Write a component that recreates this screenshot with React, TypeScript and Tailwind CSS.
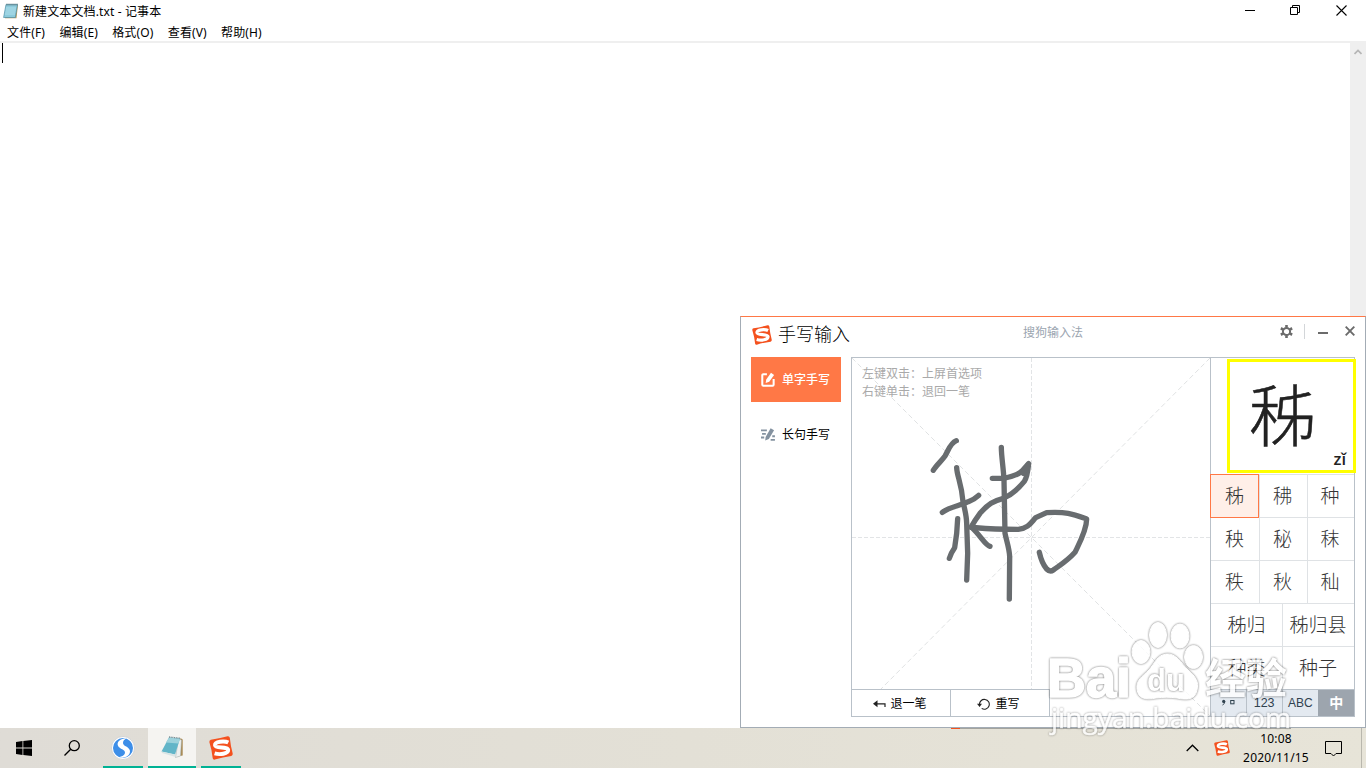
import type { JSX, ReactNode } from 'react'

const menuItems = ['文件(F)', '编辑(E)', '格式(O)', '查看(V)', '帮助(H)']
const singles = ['秭', '䄶', '种', '秧', '秘', '秣', '秩', '秋', '秈']
const phrases = ['秭归', '秭归县', '种类', '种子']

const SogouLogo = ({ className }: { className: string }): JSX.Element => (
  <svg viewBox="0 0 24 24" className={className}>
    <path
      d="M.4 6.2Q0 4.4 1.8 3.8Q10 2.6 18.6 .3Q20.4 0 20.8 1.8Q21.6 10 23.7 17.6Q24 19.4 22.3 20Q14 21 5.8 23.6Q4.1 24 3.7 22.2Q2.8 13.5 .4 6.2Z"
      fill="#f4511e"
    />
    <path
      d="M19.3 6.6C15.5 4.6 5.7 5.4 6 9.2C6.4 12.7 19 10.2 19.2 14C19.3 17.9 10.7 18.9 5.6 17.4"
      fill="none"
      stroke="#fff"
      strokeWidth="3.9"
    />
  </svg>
)

const NotepadIcon = ({ className }: { className: string }): JSX.Element => (
  <svg viewBox="0 0 16 16" className={className}>
    <path d="M3.5 1.5H15L13.5 15.2H2Z" fill="#b9975d" />
    <path d="M3 1.5H14.5L12.3 14.5H.6Z" fill="#8ccbdc" stroke="#4f8fa6" strokeWidth=".7" />
    <path d="M3 5H13M2.7 7H12.7M2.4 9H12.4M2 11H12" stroke="#c9ecf5" strokeWidth=".6" />
    <path d="M4 .5V2.7M6 .5V2.7M8 .5V2.7M10 .5V2.7M12 .5V2.7M14 .5V2.7" stroke="#617b86" strokeWidth=".8" />
  </svg>
)

const TitleBar = (): JSX.Element => (
  <div className="flex h-[22px] items-center justify-between pr-[19px] pl-[3px]">
    <div className="flex items-center gap-1">
      <NotepadIcon className="h-4 w-4" />
      <span className="mt-px tracking-[.12px]">新建文本文档.txt - 记事本</span>
    </div>
    <div className="mb-[2px] flex items-center gap-[35px]">
      <svg className="h-[11px] w-[11px]" viewBox="0 0 11 11">
        <path d="M1 5.5H11" stroke="#000" />
      </svg>
      <svg className="h-[11px] w-[11px]" viewBox="0 0 11 11" fill="none" stroke="#000">
        <path d="M.5 2.5H7.5V9.5H.5ZM2.5 2.5V.5H9.5V7.5H7.5" />
      </svg>
      <svg className="h-[11px] w-[11px]" viewBox="0 0 11 11" stroke="#000" strokeWidth="1.1">
        <path d="M.5 .5L10.5 10.5M10.5 .5L.5 10.5" />
      </svg>
    </div>
  </div>
)

const ModeButton = ({
  active,
  icon,
  label,
}: {
  active?: boolean
  icon: ReactNode
  label: string
}): JSX.Element => (
  <div
    className={
      active
        ? 'flex h-[45px] items-center gap-[6px] bg-[#ff7846] pl-[10px] font-medium text-white'
        : 'flex h-[45px] items-center gap-[6px] pl-[10px] text-black'
    }
  >
    {icon}
    <span>{label}</span>
  </div>
)

const Sidebar = (): JSX.Element => (
  <div className="flex w-[90px] flex-col gap-[10px]">
    <ModeButton
      active
      label="单字手写"
      icon={
        <svg className="h-[15px] w-[15px]" viewBox="0 0 14 14" fill="none">
          <path
            d="M5.5 2H2.2Q1.2 2 1.2 3V11.8Q1.2 12.8 2.2 12.8H10.8Q11.8 12.8 11.8 11.8V6.5"
            stroke="#fff"
            strokeWidth="1.9"
          />
          <path d="M4.4 10.2L4.8 7.2L9.3 .8L12.2 2.8L7.7 9Z" fill="#fff" />
        </svg>
      }
    />
    <ModeButton
      label="长句手写"
      icon={
        <svg className="h-[15px] w-[15px]" viewBox="0 0 14 14">
          <path d="M0 3.2H5.5M1 6.4H4.5M0 9.8H3M10.5 8.6H13M9 12H13" stroke="#8492a0" strokeWidth="1.7" />
          <path d="M3.9 12.7L4.3 9.3L9 1.2L12.2 3L7.3 11.2Z" fill="#8492a0" />
        </svg>
      }
    />
  </div>
)

const WritingPad = (): JSX.Element => (
  <div className="relative flex h-[360px] w-[360px] flex-col border border-[#b9c1c9]">
    <svg className="absolute top-0 left-0 h-[358px] w-[358px]" viewBox="0 0 358 358" fill="none">
      <path d="M179.5 0V331M0 179.5H358" stroke="#e2e4e6" strokeDasharray="4 2" />
      <path d="M0 0L358 358M358 0L29 331" stroke="#e0e2e3" strokeDasharray="5 3" />
      <g
        transform="translate(48 62) scale(.33333)"
        stroke="#686c6f"
        strokeWidth="16"
        strokeLinecap="round"
        strokeLinejoin="round"
      >
        <path d="M169 62C150 70 145 92 135 108C124 124 108 136 100 151" />
        <path d="M127 277C150 260 178 258 205 245Q225 237 236 226" />
        <path d="M170 143C171 170 185 190 189 245C196 275 200 290 200 310L203 400L200 480" />
        <path d="M173 296L170 340L164 383Q152 400 148 415" />
        <path d="M270 379C255 375 243 348 215 322" />
        <path d="M304 82C304 110 310 140 312 180L315 340C320 365 328 385 329 410L328 537" />
        <path d="M277 175H310Q350 168 366 153L386 131Q382 170 373 184C350 212 335 225 310 235C280 243 265 252 240 280Q225 300 213 322C250 325 270 328 355 328C385 325 393 308 407 293L440 278C500 275 515 281 560 297C560 330 538 370 525 397C500 425 480 435 460 450Q450 457 440 447C430 435 422 415 418 397" />
        <path d="M384 134L370 160" />
      </g>
    </svg>
    <div className="flex-1 pt-[7px] pl-[10px] leading-[18px] text-[#a9a9a9]">
      <p>左键双击：上屏首选项</p>
      <p>右键单击：退回一笔</p>
    </div>
    <div className="relative flex h-[27px] w-[198px] border-t border-r border-[#b9c1c9] bg-white pt-px">
      <div className="-mt-px flex w-[99px] items-center justify-center gap-[4px] border-r border-[#b9c1c9] pt-[2px] pr-[2px]">
        <svg className="h-[9px] w-[13px]" viewBox="0 0 13 9">
          <path d="M0 3.8L4.5 .3V7.3Z" fill="#222" />
          <path d="M3 3.8H12V7" fill="none" stroke="#222" strokeWidth="1.2" />
        </svg>
        <span>退一笔</span>
      </div>
      <div className="flex flex-1 items-center justify-center gap-[5px] pt-px pr-[3px]">
        <svg className="h-[12px] w-[13px]" viewBox="0 0 13 12">
          <path d="M2.5 6.7A4.9 4.9 0 1 1 4.7 10.4" fill="none" stroke="#222" strokeWidth="1.1" />
          <path d="M0 5.8H5L2.6 9Z" fill="#222" />
        </svg>
        <span>重写</span>
      </div>
    </div>
  </div>
)

const Candidates = (): JSX.Element => (
  <div className="flex h-[360px] w-[144px] flex-col border-t border-r border-b border-[#b9c1c9]">
    <div className="relative h-[116px]">
      <div className="absolute top-px left-[16px] h-[114px] w-[129px] border-[3px] border-[#ffff00] bg-white text-[#222]">
        <span className="absolute top-[15px] left-[19px] text-[67px] leading-[76px] font-light [-webkit-text-stroke:.5px]">
          秭
        </span>
        <span className="absolute right-[7px] bottom-px font-['Open_Sans','Noto_Sans',sans-serif] text-[16.5px] leading-[20px] font-semibold">
          zǐ
        </span>
      </div>
    </div>
    <div className="grid grid-cols-[48px_48px_47px] text-[19px] leading-none font-light text-[#333]">
      {singles.map((char, index) => (
        <div
          key={char}
          className={
            index === 0
              ? 'relative z-10 -mb-px -ml-px flex h-[44px] items-center justify-center border border-[#ff7846] bg-[#ffefe8]'
              : index % 3 === 0
                ? 'flex h-[43px] items-center justify-center border-t border-[#dfe2e5] pr-px'
                : 'flex h-[43px] items-center justify-center border-t border-l border-[#dfe2e5] pr-[2px]'
          }
        >
          {char}
        </div>
      ))}
    </div>
    <div className="grid grid-cols-[71px_72px] text-[19px] leading-none font-light text-[#333]">
      {phrases.map((phrase, index) => (
        <div
          key={phrase}
          className={
            index % 2 === 0
              ? 'flex h-[43px] items-center justify-center border-t border-[#dfe2e5]'
              : 'flex h-[43px] items-center justify-center border-t border-l border-[#dfe2e5] pr-px'
          }
        >
          {phrase}
        </div>
      ))}
    </div>
    <div className="grid flex-1 grid-cols-4 border-t border-[#b9c1c9] bg-[#e3e9f0] font-['Liberation_Sans','Noto_Sans_CJK_SC',sans-serif] text-[12px] text-[#30424f]">
      <div className="flex items-center justify-center gap-[4px] border-r border-[#b9c1c9]">
        <svg className="h-[8px] w-[14px]" viewBox="0 0 14 8">
          <circle cx="2.7" cy="2.4" r="1.6" fill="#30424f" />
          <path d="M3.8 2.4Q4 4.8 1.5 6" fill="none" stroke="#30424f" />
          <rect x="9.7" y="1.5" width="3.3" height="3.3" fill="none" stroke="#30424f" />
        </svg>
      </div>
      <div className="flex items-center justify-center border-r border-[#b9c1c9] text-[12.5px]">123</div>
      <div className="flex items-center justify-center">ABC</div>
      <div className="flex items-center justify-center bg-[#9da5ae] text-[14px] font-bold text-white">
        中
      </div>
    </div>
  </div>
)

const HandwritingWindow = (): JSX.Element => (
  <div className="absolute top-[316px] left-[740px] h-[412px] w-[626px] border border-[#a3acb5] border-t-[#ff7846] bg-white">
    <div className="flex h-[40px] items-start pl-[11px]">
      <div className="flex w-[271px] items-center gap-[6px] pt-[4px]">
        <SogouLogo className="h-[20px] w-[20px]" />
        <span className="text-[18px] leading-[27px] font-light text-black">手写输入</span>
      </div>
      <span className="pt-[7px] text-[12px] leading-[18px] text-[#9ba5b0]">搜狗输入法</span>
      <div className="ml-auto flex w-[85px] items-center pt-[7px]">
        <svg className="h-[13px] w-[13px]" viewBox="0 0 12 12">
          <circle cx="6" cy="6" r="3.3" fill="none" stroke="#6b6b6b" strokeWidth="1.8" />
          <path
            d="M6 0V2.4M6 9.6V12M.8 3L2.9 4.2M9.1 7.8L11.2 9M.8 9L2.9 7.8M9.1 4.2L11.2 3"
            stroke="#6b6b6b"
            strokeWidth="2.4"
          />
        </svg>
        <span className="ml-[11px] h-[15px] w-px bg-[#d3d6d9]" />
        <span className="mt-[3px] ml-[13px] h-[2px] w-[10px] bg-[#6b6b6b]" />
        <svg className="-mt-px ml-[17px] h-[10px] w-[10px] shrink-0" viewBox="0 0 10 10">
          <path d="M.7 .7L9.3 9.3M9.3 .7L.7 9.3" stroke="#6b6b6b" strokeWidth="1.9" />
        </svg>
      </div>
    </div>
    <div className="flex pl-[10px]">
      <Sidebar />
      <div className="ml-[10px] flex">
        <WritingPad />
        <Candidates />
      </div>
    </div>
  </div>
)

const Watermark = (): JSX.Element => (
  <div className="pointer-events-none absolute top-[616px] left-[1044px] h-[124px] w-[255px] opacity-80">
    <svg viewBox="0 0 255 124" className="h-[124px] w-[255px]" fill="#fff" stroke="#fff">
      <g className="drop-shadow-[0_0_1px_rgba(0,0,0,0.7)]">
        <ellipse cx="97" cy="36" rx="9" ry="11.5" />
        <ellipse cx="114" cy="19" rx="8.5" ry="12.5" />
        <ellipse cx="136" cy="20" rx="9" ry="12" />
        <ellipse cx="149.5" cy="41" rx="9" ry="11.5" />
        <path d="M122.5 38C132 37 137 47 144 54C152 61 155 66 153 74C151 84 143 84 133 82C126 81 120 81 112 82C102 84 94 83 93 73C92 64 98 61 105 54C111 47 113 39 122.5 38Z" />
      </g>
      <g
        strokeWidth="1.5"
        strokeLinejoin="round"
        fontWeight="700"
        className="font-['Liberation_Sans','Noto_Sans_CJK_SC',sans-serif]"
      >
        <text
          x="3"
          y="81"
          fontSize="55"
          textLength="84"
          lengthAdjust="spacingAndGlyphs"
          className="drop-shadow-[0_0_1px_rgba(0,0,0,0.7)]"
        >
          Bai
        </text>
        <text
          x="103"
          y="75"
          fontSize="31"
          textLength="38"
          lengthAdjust="spacingAndGlyphs"
          strokeWidth="0"
          className="drop-shadow-[0_0_1px_rgba(0,0,0,0.7)]"
        >
          du
        </text>
        <text
          x="161"
          y="78"
          fontSize="42"
          textLength="82"
          lengthAdjust="spacingAndGlyphs"
          strokeWidth="0"
          className="drop-shadow-[0_0_1px_rgba(0,0,0,0.7)]"
        >
          经验
        </text>
      </g>
      <text
        x="7"
        y="112"
        fontSize="27"
        textLength="240"
        lengthAdjust="spacingAndGlyphs"
        strokeWidth=".5"
        className="font-['Open_Sans',sans-serif] drop-shadow-[0_0_1px_rgba(0,0,0,0.5)]"
      >
        jingyan.baidu.com
      </text>
    </svg>
  </div>
)

const Taskbar = (): JSX.Element => (
  <div className="flex h-[40px] shrink-0 items-stretch justify-between bg-linear-to-r from-[#dfdcd6] via-[#e3e0d6] to-[#e7e4d8]">
    <div className="flex">
      <div className="flex w-[48px] items-center justify-center">
        <svg className="h-4 w-4" viewBox="0 0 16 16">
          <path d="M0 2L6.5 1.1V7.5H0ZM7.3 1L16 0V7.5H7.3ZM0 8.5H6.5V14.9L0 14ZM7.3 8.5H16V16L7.3 15Z" />
        </svg>
      </div>
      <div className="flex w-[48px] items-center justify-center">
        <svg className="h-4 w-4" viewBox="0 0 16 16" fill="none" stroke="#000" strokeWidth="1.3">
          <circle cx="10.3" cy="5.7" r="5" />
          <path d="M6.7 9.3L.5 15.5" />
        </svg>
      </div>
      <div className="ml-[7px] flex w-[40px] items-center justify-center border-b-2 border-[#00b294]">
        <svg className="mt-[2px] h-6 w-6" viewBox="0 0 24 24">
          <circle cx="12" cy="12" r="11.5" fill="#fff" stroke="#c5c8cc" strokeWidth=".7" />
          <circle cx="12" cy="12" r="10" fill="#3d8ee8" />
          <path
            d="M15.5 2.2C9 2.5 5.5 6 7 9.8C8.5 13.3 14.5 13.5 14 17C13.6 19.5 11 20.5 7.8 21.2C14 23 19.8 19.5 18.9 14.6C18 10.5 12.5 10.5 12 7.3C11.7 4.8 13.5 3.5 15.5 2.2Z"
            fill="#fff"
          />
        </svg>
      </div>
      <div className="ml-[5px] flex w-[48px] items-center justify-center border-b-2 border-[#00b294] bg-[#f5f4f1]">
        <svg className="h-6 w-6" viewBox="0 0 24 24">
          <path d="M20.5 3L22.7 4.5V20.5L17 21.5Z" fill="#a88952" />
          <path d="M18.5 4L21.5 5L20.5 21L15.5 22.5Z" fill="#eef0ef" stroke="#9ba8a9" strokeWidth=".5" />
          <path d="M9 2.5L20 3.5L15 19.5L1.5 16.5Z" fill="#62b5c8" />
          <path d="M9 2.5L20 3.5L18.5 8.5L6 7.5Z" fill="#9dd2dc" />
          <path d="M1.5 16.5L15 19.5L15.5 22L2 18Z" fill="#d8e4e5" />
          <path d="M9 2L20 3.2" stroke="#71868d" strokeWidth="1.3" strokeDasharray="1 .7" />
        </svg>
      </div>
      <div className="ml-[5px] flex w-[40px] items-center justify-center border-b-2 border-[#00b294]">
        <SogouLogo className="mt-[2px] h-6 w-6" />
      </div>
    </div>
    <div className="flex items-center text-[12px] text-black">
      <svg className="h-[8px] w-[13px]" viewBox="0 0 13 8">
        <path d="M.7 7L6.5 1.2L12.3 7" fill="none" stroke="#000" strokeWidth="1.3" />
      </svg>
      <SogouLogo className="ml-[15px] h-4 w-4" />
      <div className="ml-[12px] w-[68px] text-center leading-[19px] tracking-[.2px]">
        <p>10:08</p>
        <p className="whitespace-nowrap">2020/11/15</p>
      </div>
      <svg className="ml-[15px] h-[17px] w-[17px]" viewBox="0 0 17 17">
        <path d="M.5 1.5H16.5V13.5H11L8.5 16L6 13.5H.5Z" fill="none" stroke="#000" />
      </svg>
      <span className="ml-[19px] h-[40px] w-[5px] border-l border-[#b9b7ad]" />
    </div>
  </div>
)

export default function App(): JSX.Element {
  return (
    <div className="relative flex h-[768px] w-[1366px] flex-col overflow-hidden bg-white font-['Noto_Sans','Noto_Sans_CJK_SC',sans-serif] text-[12px] leading-[18px] text-black">
      <TitleBar />
      <div className="flex h-[19px] gap-[14.3px] pl-[7px] leading-[22px] tracking-[.13px]">
        {menuItems.map((item) => (
          <span key={item}>{item}</span>
        ))}
      </div>
      <div className="flex flex-1 border-t-2 border-[#efefef]">
        <div className="flex-1 pl-[2px]">
          <div className="h-[20px] w-px bg-black" />
        </div>
        <div className="flex w-[16px] justify-center bg-[#efefef] pt-[6px]">
          <svg className="h-[6px] w-[8px]" viewBox="0 0 8 6">
            <path d="M.5 5L4 1.5L7.5 5" fill="none" stroke="#b5b5b5" strokeWidth="1.7" />
          </svg>
        </div>
      </div>
      <Taskbar />
      <HandwritingWindow />
      <div className="absolute top-[728px] left-[951px] flex h-px w-[340px]">
        <span className="w-[9px] bg-[#f4511e]" />
        <span className="flex-1 bg-[#a3a39e]" />
      </div>
      <Watermark />
    </div>
  )
}
